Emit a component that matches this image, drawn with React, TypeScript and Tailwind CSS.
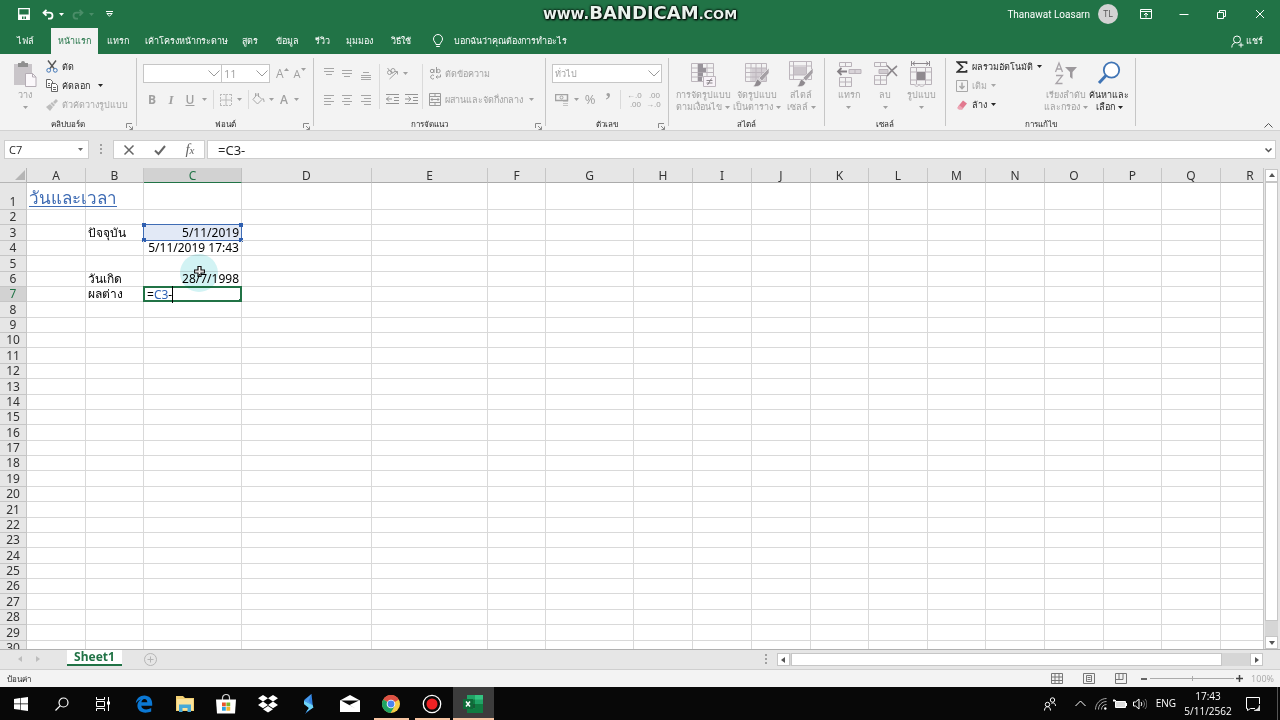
import { ReactNode } from 'react'
import clsx from 'clsx'

const UI_FONT = "font-['Open_Sans','Noto_Sans',sans-serif]"
const CELL_FONT = "font-['Noto_Sans','Open_Sans',sans-serif]"

const TABS = [
  { label: 'ไฟล์', width: 'w-[51px]' },
  { label: 'หน้าแรก', width: 'w-[47px]', active: true },
  { label: 'แทรก', width: 'w-[40px]' },
  { label: 'เค้าโครงหน้ากระดาษ', width: 'w-[96px]' },
  { label: 'สูตร', width: 'w-[32px]' },
  { label: 'ข้อมูล', width: 'w-[42px]' },
  { label: 'รีวิว', width: 'w-[29px]' },
  { label: 'มุมมอง', width: 'w-[45px]' },
  { label: 'วิธีใช้', width: 'w-[37px]' }
]

const COLUMNS = [
  { name: 'A', width: 'w-[59px]' },
  { name: 'B', width: 'w-[58px]' },
  { name: 'C', width: 'w-[98px]' },
  { name: 'D', width: 'w-[130px]' },
  { name: 'E', width: 'w-[116px]' },
  { name: 'F', width: 'w-[58px]' },
  { name: 'G', width: 'w-[88px]' },
  { name: 'H', width: 'w-[59px]' },
  { name: 'I', width: 'w-[59px]' },
  { name: 'J', width: 'w-[59px]' },
  { name: 'K', width: 'w-[58px]' },
  { name: 'L', width: 'w-[59px]' },
  { name: 'M', width: 'w-[58px]' },
  { name: 'N', width: 'w-[59px]' },
  { name: 'O', width: 'w-[59px]' },
  { name: 'P', width: 'w-[58px]' },
  { name: 'Q', width: 'w-[59px]' },
  { name: 'R', width: 'w-[59px]' }
]

const ROWS = Array.from({ length: 30 }, (_, i) => i + 1)

const CELLS: Record<string, ReactNode> = {
  A1: <span className="text-[17px] text-[#3f6cb4] underline underline-offset-2">วันและเวลา</span>,
  B3: 'ปัจจุบัน',
  C3: <ReferencedCell>5/11/2019</ReferencedCell>,
  C4: '5/11/2019 17:43',
  C5: <Pointer />,
  B6: 'วันเกิด',
  C6: '28/7/1998',
  B7: 'ผลต่าง',
  C7: <EditedCell />
}

export default function App() {
  return (
    <div
      className={clsx(
        'flex h-screen flex-col overflow-hidden bg-[#e6e6e6] text-[9px] text-[#262626]',
        UI_FONT
      )}
    >
      <TitleBar />
      <TabBar />
      <Ribbon />
      <FormulaBar />
      <Sheet />
      <SheetTabs />
      <StatusBar />
      <Taskbar />
    </div>
  )
}

function TitleBar() {
  return (
    <header className="relative flex h-7 shrink-0 items-center bg-[#217346] text-white">
      <div className="flex items-center pl-[18px]">
        <button aria-label="บันทึก">
          <svg width="12" height="12" viewBox="0 0 12 12" fill="none" stroke="#fff">
            <path d="M.7.7h10.6v10.6H.7z" strokeWidth="1.3" />
            <path d="M1 6.500h10V11H1z" fill="#fff" stroke="none" />
            <path d="M4 8.500h1.500V11H4zM6.500 8.500H8V11H6.500z" fill="#217346" stroke="none" />
          </svg>
        </button>
        <button aria-label="เลิกทำ" className="ml-3 flex items-center gap-[5px]">
          <UndoIcon />
          <Caret />
        </button>
        <button aria-label="ทำซ้ำ" className="ml-2 flex items-center gap-[5px] text-[#4a8d68]">
          <UndoIcon flip />
          <Caret />
        </button>
        <button aria-label="กำหนดแถบเครื่องมือ" className="ml-3">
          <svg width="7" height="6" viewBox="0 0 7 6" fill="none" stroke="#fff">
            <path d="M0 .5h7M.8 2.500h5.400L3.500 5.200z" />
          </svg>
        </button>
      </div>
      <Watermark />
      <div className="ml-auto flex items-center">
        <span className="font-['Roboto',sans-serif] text-[10px]">Thanawat Loasarn</span>
        <span className="ml-2 flex size-5 items-center justify-center rounded-full bg-[#d3d3d3] text-[9px] text-[#555]">
          TL
        </span>
        <div className="ml-[9px] mr-px flex">
          <WindowButton label="ตัวเลือก Ribbon">
            <path d="M.5 1.500h11v9H.5zM.5 3.500h11M6 9.500V5.500M4 7l2-2 2 2" />
          </WindowButton>
          <WindowButton label="ย่อ">
            <path d="M1.500 6.500h9" />
          </WindowButton>
          <WindowButton label="คืนค่า">
            <path d="M1.500 4.500h6v6h-6zM3.500 4.500v-2h6v6h-2" />
          </WindowButton>
          <WindowButton label="ปิด">
            <path d="M2 2l8 8M10 2l-8 8" />
          </WindowButton>
        </div>
      </div>
    </header>
  )
}

function Watermark() {
  return (
    <div className="absolute inset-x-0 top-0 flex h-[26px] items-baseline justify-center font-['DejaVu_Sans',sans-serif] leading-[26px] font-bold text-[#eaf3ed] [text-shadow:0_0_2px_#000,0_0_3px_#000,1px_1px_2px_#000]">
      <span className="text-[15px]">www.</span>
      <span className="text-[18px]">BANDICAM</span>
      <span className="text-[13px]">.COM</span>
    </div>
  )
}

function WindowButton({ label, children }: { label: string; children: ReactNode }) {
  return (
    <button aria-label={label} className="flex w-[38px] justify-center">
      <svg width="12" height="12" viewBox="0 0 12 12" fill="none" stroke="#fff">
        {children}
      </svg>
    </button>
  )
}

function UndoIcon({ flip }: { flip?: boolean }) {
  return (
    <svg
      width="12"
      height="11"
      viewBox="0 0 12 11"
      fill="none"
      stroke="currentColor"
      strokeWidth="1.8"
      className={clsx(flip && '-scale-x-100')}
    >
      <path d="M1.500 3.700h6a2.900 2.900 0 0 1 0 6H6M4.500.8l-3 2.900 3 2.900" />
    </svg>
  )
}

function Caret({ className }: { className?: string }) {
  return (
    <svg
      width="5"
      height="3"
      viewBox="0 0 5 3"
      fill="currentColor"
      className={clsx('shrink-0', className)}
    >
      <path d="M0 0h5L2.500 3z" />
    </svg>
  )
}

function TabBar() {
  return (
    <nav className="flex h-[26px] shrink-0 items-stretch bg-[#217346] text-white">
      {TABS.map((tab) => (
        <button
          key={tab.label}
          className={clsx(
            'flex shrink-0 items-center justify-center whitespace-nowrap',
            tab.width,
            tab.active && 'bg-[#f3f3f3] text-[#217346]'
          )}
        >
          {tab.label}
        </button>
      ))}
      <button className="ml-[13px] flex items-center gap-[10px] whitespace-nowrap">
        <svg width="12" height="14" viewBox="0 0 12 14" fill="none" stroke="#fff">
          <path d="M4 10.500c0-2-2.500-2.800-2.500-5.500a4.500 4.500 0 0 1 9 0c0 2.700-2.500 3.500-2.500 5.500zM4.200 12.500h3.600" />
        </svg>
        บอกฉันว่าคุณต้องการทำอะไร
      </button>
      <button className="mr-[17px] ml-auto flex items-center gap-[2px]">
        <svg width="13" height="13" viewBox="0 0 13 13" fill="none" stroke="#fff">
          <circle cx="6" cy="4.500" r="3.500" />
          <path d="M.8 12.500c0-3 2-4.700 4-5M7.500 10h5M10 7.500v5" />
        </svg>
        แชร์
      </button>
    </nav>
  )
}

function Ribbon() {
  return (
    <div className="flex h-[77px] shrink-0 border-b border-[#d2d2d2] bg-[#f3f3f3]">
      <Group title="คลิปบอร์ด" width="w-[137px]" launcher>
        <div className="flex">
          <BigButton width="w-[34px]" className="ml-2" label="วาง" muted>
            <svg width="24" height="26" viewBox="0 0 24 26">
              <path d="M1 3h18v21H1z" fill="#c9c5c9" />
              <path d="M5 2h3a2 2 0 0 1 4 0h3v4H5z" fill="#8f8f8f" />
              <path d="M12.500 12.500h7l3.500 3.500v9.500H12.500z" fill="#fbf8fb" stroke="#b5adb5" />
              <path d="M19.500 12.500V16H23" fill="none" stroke="#b5adb5" />
            </svg>
          </BigButton>
          <div className="ml-1 flex flex-col pt-[3px]">
            <SmallButton label="ตัด">
              <svg width="12" height="13" viewBox="0 0 12 13" fill="none">
                <path d="M2 .5l6 8M10 .5l-6 8" stroke="#555" strokeWidth="1.400" />
                <circle cx="2.700" cy="10.300" r="1.900" stroke="#3f74b5" />
                <circle cx="9.300" cy="10.300" r="1.900" stroke="#3f74b5" />
              </svg>
            </SmallButton>
            <SmallButton label="คัดลอก" caret="ml-1">
              <svg width="12" height="13" viewBox="0 0 12 13" stroke="#666" fill="#fff">
                <path d="M.5.5h4l2 2v6h-6z" />
                <path d="M5.500 4.500h4l2 2v6h-6zM7 8.500h3M7 10.500h3M2 4.500h2M2 6.500h2" />
              </svg>
            </SmallButton>
            <SmallButton label="ตัวคัดวางรูปแบบ" muted>
              <svg width="12" height="12" viewBox="0 0 12 12" fill="#bdbdbd">
                <path d="M10 0l2 2-3 3-2-2zM6 3l3 3-1.500 1.500-3-3zM4 5l3 3-3 4-4-4z" />
              </svg>
            </SmallButton>
          </div>
        </div>
      </Group>
      <Group title="ฟอนต์" width="w-[177px]" launcher muted>
        <div className="flex h-full flex-col gap-[7px] pt-[10px] pl-[6px]">
          <div className="flex items-center">
            <Combo label="ฟอนต์" value="" width="w-[79px]" />
            <Combo
              label="ขนาดฟอนต์"
              value="11"
              width="w-[49px]"
              className="-ml-px text-[11px]"
            />
            <button aria-label="เพิ่มขนาด" className="ml-[6px] flex text-[12px] leading-[19px]">
              A<Caret className="mt-1 rotate-180" />
            </button>
            <button aria-label="ลดขนาด" className="ml-[5px] flex text-[11px] leading-[19px]">
              A<Caret className="mt-1" />
            </button>
          </div>
          <div className="flex h-[19px] items-center text-[12px]">
            <button className="w-[18px] font-bold">B</button>
            <button className="w-5 font-['Liberation_Serif',serif] text-[13px] font-bold italic">
              I
            </button>
            <button className="w-[18px] font-semibold underline">U</button>
            <Caret className="mx-[3px]" />
            <VLine className="mx-[3px]" />
            <button aria-label="เส้นขอบ" className="mx-[3px] flex items-center gap-[5px]">
              <svg width="12" height="12" viewBox="0 0 12 12" fill="none" stroke="#bababa">
                <path d="M.5 0v12M11.500 0v12M0 .5h12M0 11.500h12" strokeDasharray="2 1" />
                <path d="M6 0v12M0 6h12" />
              </svg>
              <Caret />
            </button>
            <VLine className="mx-[3px]" />
            <button aria-label="สีเติม" className="flex items-center gap-1">
              <svg width="13" height="13" viewBox="0 0 13 13" fill="none" stroke="#a6a6a6">
                <path d="M5 1.500l5 5-4.500 4.500L1 6.500zM3.500 3V1a1.500 1.500 0 0 1 3 0v3" />
                <path d="M10.500 5c1.500 1 1.500 3 1.500 4" />
              </svg>
              <Caret />
            </button>
            <button
              aria-label="สีฟอนต์"
              className="ml-[6px] flex items-center gap-[6px] font-semibold"
            >
              <span>A</span>
              <Caret />
            </button>
          </div>
        </div>
      </Group>
      <Group title="การจัดแนว" width="w-[232px]" launcher muted>
        <div className="flex pt-[10px]">
          <div className="grid w-[65px] grid-cols-3 gap-y-[7px] pr-1 pl-[6px]">
            <AlignButton label="จัดบน" d="M1 1.500h10M1 4.500h10M3 7.500h6" />
            <AlignButton label="จัดกลางแนวตั้ง" d="M1 3.500h10M1 6.500h10M3 9.500h6" />
            <AlignButton label="จัดล่าง" d="M3 5.500h6M1 8.500h10M1 10.500h10M1 12.500h10" />
            <AlignButton label="จัดซ้าย" d="M1 2.500h10M1 5.500h7M1 8.500h10M1 11.500h7" />
            <AlignButton label="จัดกึ่งกลาง" d="M1 2.500h10M3 5.500h6M1 8.500h10M3 11.500h6" />
            <AlignButton label="จัดขวา" d="M1 2.500h10M4 5.500h7M1 8.500h10M4 11.500h7" />
          </div>
          <div className="flex w-[44px] flex-col gap-[7px] border-x border-[#dadada] pl-[6px]">
            <button aria-label="การวางแนว" className="flex h-[19px] items-center gap-1">
              <svg width="13" height="13" viewBox="0 0 13 13" fill="none" stroke="#a0a0a0">
                <circle cx="3.500" cy="5.500" r="2" />
                <circle cx="7" cy="3.500" r="2" />
                <path d="M1.500 1l5 6M3.500 12L11.500 4.500M8.500 4.500h3v3" />
              </svg>
              <Caret />
            </button>
            <div className="flex h-[19px] items-center gap-[6px]">
              <button aria-label="ลดการเยื้อง">
                <svg width="13" height="12" viewBox="0 0 13 12" fill="none" stroke="#929292">
                  <path d="M0 .5h13M8 3.500h5M8 6.500h5M0 9.500h13M0 5h6M3 2.500L.7 5 3 7.500" />
                </svg>
              </button>
              <button aria-label="เพิ่มการเยื้อง">
                <svg width="13" height="12" viewBox="0 0 13 12" fill="none" stroke="#929292">
                  <path d="M0 .5h13M8 3.500h5M8 6.500h5M0 9.500h13M0 5h6M3.500 2.500L5.800 5 3.500 7.500" />
                </svg>
              </button>
            </div>
          </div>
          <div className="flex flex-col gap-[7px] pl-[6px] whitespace-nowrap">
            <button className="flex h-[19px] items-center gap-1">
              <svg width="12" height="13" viewBox="0 0 12 13" fill="none" stroke="#9a9a9a">
                <circle cx="3" cy="4" r="1.700" />
                <path d="M5 2v4M7.500 0v6" />
                <circle cx="9.500" cy="4" r="1.700" />
                <path d="M5 8.500a2 2 0 1 0 0 3M11.500 7.500v2.500H7M8.500 8.500L7 10l1.500 1.500" />
              </svg>
              ตัดข้อความ
            </button>
            <button className="flex h-[19px] items-center gap-1">
              <svg width="12" height="13" viewBox="0 0 12 13" fill="none" stroke="#9a9a9a">
                <path d="M.5.5h11v12H.5zM.5 3.500h11M.5 9.500h11M6 .5v3M6 9.500v3M2 6.500h8M3.500 5L2 6.500 3.500 8M8.500 5L10 6.500 8.500 8" />
              </svg>
              ผสานและจัดกึ่งกลาง
              <Caret className="ml-[2px]" />
            </button>
          </div>
        </div>
      </Group>
      <Group title="ตัวเลข" width="w-[123px]" launcher muted>
        <div className="flex flex-col gap-[7px] pt-[10px] pl-[6px]">
          <Combo label="รูปแบบตัวเลข" value="ทั่วไป" width="w-[110px]" />
          <div className="flex h-[19px] items-center">
            <button aria-label="รูปแบบบัญชี" className="flex items-center gap-[5px] pl-[3px]">
              <svg width="14" height="12" viewBox="0 0 14 12" fill="none" stroke="#a3a3a3">
                <path d="M.5.5h12v6H.5z" strokeWidth="1.500" />
                <circle cx="6.500" cy="3.500" r="1.500" />
                <path d="M8 7.500h5M8 9.500h5M8 11.500h5" stroke="#c4c4c4" />
              </svg>
              <Caret />
            </button>
            <button className="ml-[3px] w-4 text-[13px]">%</button>
            <button
              aria-label="ลักษณะจุลภาค"
              className="ml-[6px] w-2 font-['Liberation_Serif',serif] text-[20px] leading-[10px] font-bold"
            >
              ’
            </button>
            <VLine className="mr-[6px] ml-2" />
            <DecimalButton label="เพิ่มตำแหน่งทศนิยม" top="←.0" bottom=".00" />
            <DecimalButton label="ลดตำแหน่งทศนิยม" top=".00" bottom="→.0" />
          </div>
        </div>
      </Group>
      <Group title="สไตล์" width="w-[156px]" muted>
        <div className="flex pl-[3px]">
          <BigButton width="w-[62px]" label="การจัดรูปแบบ" label2="ตามเงื่อนไข" muted>
            <svg width="26" height="26" viewBox="0 0 26 26" fill="none" stroke="#bdb6bd">
              <path d="M1.500 2.500h22v18h-22zM1.500 7h22M1.500 11.500h22M1.500 16h22M8 2.500v18M17 2.500v18" />
              <path d="M8 3h5v4H8zM8 7h8v4H8zM8 11.500h5v4H8zM8 16h4v4H8z" fill="#98939a" stroke="none" />
              <path d="M13.500 15.500h12v10h-12z" fill="#f8f3f8" />
              <path d="M16.500 19.500h6M16.500 22h6M21.500 17.500l-4 6.500" stroke="#8a858a" />
            </svg>
          </BigButton>
          <BigButton width="w-[46px]" label="จัดรูปแบบ" label2="เป็นตาราง" muted>
            <svg width="26" height="26" viewBox="0 0 26 26" fill="none" stroke="#bdb6bd">
              <path d="M8 7h14v13H8z" fill="#d3ced3" stroke="none" />
              <path d="M1.500 2.500h21v18h-21zM1.500 7h21M1.500 11.500h21M1.500 16h21M7 2.500v18M12 2.500v18M17.500 2.500v18" />
              <Brush />
            </svg>
          </BigButton>
          <BigButton width="w-[42px]" label="สไตล์" label2="เซลล์" muted>
            <svg width="26" height="26" viewBox="0 0 26 26" fill="none" stroke="#bdb6bd">
              <path d="M5 6h13v8H5z" fill="#cbc6cb" stroke="none" />
              <path d="M1.500.5h22v18h-22zM1.500 5h22M1.500 14h22M5.500 .5v18M18.500 .5v18" />
              <Brush />
            </svg>
          </BigButton>
        </div>
      </Group>
      <Group title="เซลล์" width="w-[121px]" muted>
        <div className="flex pl-[5px]">
          <BigButton width="w-[37px]" label="แทรก" muted>
            <svg width="26" height="26" viewBox="0 0 26 26" fill="none" stroke="#b9b2b9">
              <path d="M3.500 1.500h12v4h-12zM9.500 1.500v4M3.500 16.500h12v9h-12zM3.500 21h12M9.500 16.500v9" />
              <path d="M13 8.500h12v4H13zM19 8.500v4" fill="#d8d3d8" />
              <path d="M2 10.500h9M5.500 7L2 10.500 5.500 14" stroke="#858085" strokeWidth="1.800" />
            </svg>
          </BigButton>
          <BigButton width="w-[36px]" label="ลบ" muted>
            <svg width="26" height="26" viewBox="0 0 26 26" fill="none" stroke="#b9b2b9">
              <path d="M2.500 1.500h12v4h-12zM8.500 1.500v4M2.500 14.500h12v9h-12zM2.500 19h12M8.500 14.500v9" />
              <path d="M7 8.500h9v4H7z" fill="#d0cbd0" />
              <path d="M15 4.500c3 3 6 6 10 10.500M25 5c-4 3-7 6-10 10" stroke="#8d888d" strokeWidth="1.600" />
            </svg>
          </BigButton>
          <BigButton width="w-[37px]" label="รูปแบบ" muted>
            <svg width="26" height="26" viewBox="0 0 26 26" fill="none" stroke="#b9b2b9">
              <path d="M2.500 0v5M20.500 0v5M3.500 2.500h16M6 .5l-2.500 2L6 4.500M17 .5l2.500 2-2.500 2" stroke="#8d888d" />
              <path d="M1.500 6.500h21v17h-21zM1.500 11h21M1.500 19h21M7.500 6.500v17M16.500 6.500v17" />
              <path d="M8 11h8v8H8z" fill="#8f8a8f" stroke="none" />
              <path d="M5 23.500c2 2.500 4 2.500 5 0 1 2.500 4 2.500 6 0" fill="#f3f3f3" />
            </svg>
          </BigButton>
        </div>
      </Group>
      <Group title="การแก้ไข" width="w-[190px]">
        <div className="flex pl-[10px]">
          <div className="flex w-[88px] flex-col pt-[3px]">
            <SmallButton label="ผลรวมอัตโนมัติ" caret="ml-0">
              <svg width="12" height="12" viewBox="0 0 12 12" fill="none" stroke="#333">
                <path d="M10.500 3V1.200h-9L6.500 6l-5 4.800h9V9" strokeWidth="1.700" />
              </svg>
            </SmallButton>
            <SmallButton label="เติม" caret="ml-0" muted>
              <svg width="12" height="12" viewBox="0 0 12 12" fill="none" stroke="#a8a8a8">
                <path d="M.5.5h11v11H.5z" />
                <path d="M6 2.500v6M3.500 6L6 8.700 8.500 6" strokeWidth="1.500" />
              </svg>
            </SmallButton>
            <SmallButton label="ล้าง" caret="ml-0">
              <svg width="12" height="12" viewBox="0 0 12 12">
                <path d="M7 1.500l4 3-5 6-4-3z" fill="#e2798f" />
                <path d="M3.300 6.200l4 3L6 10.800H3L1 9z" fill="#eda6b5" />
              </svg>
            </SmallButton>
          </div>
          <BigButton width="w-[44px]" label="เรียงลำดับ" label2="และกรอง" muted>
            <svg width="26" height="26" viewBox="0 0 26 26" fill="none" stroke="#a9a4a9">
              <path d="M2.500 11L6 2l3.500 9M3.700 8h4.600M3 14.500h6.500L3 22.500h6.500" strokeWidth="1.300" />
              <path d="M12 6h12l-4.500 5v7L17 16v-5z" fill="#9c989c" stroke="none" />
            </svg>
          </BigButton>
          <BigButton width="w-[42px]" label="ค้นหาและ" label2="เลือก">
            <svg width="26" height="26" viewBox="0 0 26 26" fill="none" stroke="#3f74b5">
              <circle cx="15.500" cy="9" r="7.700" fill="#fff" strokeWidth="1.800" />
              <path d="M10 14.500l-7 7.500" strokeWidth="3" />
            </svg>
          </BigButton>
        </div>
      </Group>
      <button aria-label="ยุบ Ribbon" className="mt-auto mr-[7px] mb-[2px] ml-auto">
        <svg width="9" height="5" viewBox="0 0 9 5" fill="none" stroke="#555">
          <path d="M.5 4.500l4-4 4 4" />
        </svg>
      </button>
    </div>
  )
}

function Brush() {
  return (
    <>
      <path d="M25 7v5l-7 8-3-3z" fill="#a5a0a5" stroke="#f3f3f3" strokeWidth=".6" />
      <path
        d="M13.500 18l4 3.500c-1 4-5 4.500-8.500 4 2.500-1.500 2-5 4.500-7.500z"
        fill="#8f8a8f"
        stroke="#f3f3f3"
        strokeWidth=".6"
      />
    </>
  )
}

interface GroupProps {
  title: string
  width: string
  launcher?: boolean
  muted?: boolean
  children: ReactNode
}

function Group({ title, width, launcher, muted, children }: GroupProps) {
  return (
    <section className={clsx('flex shrink-0 py-1', width)}>
      <div className="-mt-1 flex min-w-0 flex-1 flex-col">
        <div className={clsx('h-16 shrink-0', muted && 'text-[#a0a0a0]')}>{children}</div>
        <div className="relative text-center text-[8px] leading-3">
          {title}
          {launcher && (
            <button
              aria-label={`ตัวเลือก${title}`}
              className="absolute right-[3px] bottom-0 text-[#888]"
            >
              <svg width="7" height="7" viewBox="0 0 7 7" fill="none" stroke="currentColor">
                <path d="M.5 5V.5H6M3 3l3.500 3.500M6.500 3.500v3h-3" />
              </svg>
            </button>
          )}
        </div>
      </div>
      <div className="w-px bg-[#c6c6c6]" />
    </section>
  )
}

interface ButtonProps {
  label: string
  muted?: boolean
  children: ReactNode
}

interface BigButtonProps extends ButtonProps {
  width: string
  label2?: string
  className?: string
}

function BigButton({ width, label, label2, muted, className, children }: BigButtonProps) {
  return (
    <button
      className={clsx(
        'flex shrink-0 flex-col items-center pt-[7px] leading-3 whitespace-nowrap',
        width,
        muted && 'text-[#a0a0a0]',
        className
      )}
    >
      {children}
      <span className="mt-[2px]">{label}</span>
      <span className="flex h-3 items-center gap-[3px]">
        {label2}
        <Caret />
      </span>
    </button>
  )
}

function SmallButton({ label, muted, caret, children }: ButtonProps & { caret?: string }) {
  return (
    <button
      className={clsx(
        'flex h-[19px] items-center gap-1 whitespace-nowrap [&>svg]:shrink-0',
        muted && 'text-[#a6a6a6]'
      )}
    >
      {children}
      {label}
      {caret && <Caret className={caret} />}
    </button>
  )
}

function AlignButton({ label, d }: { label: string; d: string }) {
  return (
    <button aria-label={label} className="flex h-[19px] items-center justify-center">
      <svg width="12" height="13" viewBox="0 0 12 13" fill="none" stroke="#a6a6a6">
        <path d={d} />
      </svg>
    </button>
  )
}

function DecimalButton({ label, top, bottom }: { label: string; top: string; bottom: string }) {
  return (
    <button
      aria-label={label}
      className="mr-[5px] w-[14px] text-right text-[8px] leading-[9px] tabular-nums font-['Liberation_Sans',sans-serif]"
    >
      <span className="block">{top}</span>
      <span className="block">{bottom}</span>
    </button>
  )
}

interface ComboProps {
  label: string
  value: string
  width: string
  className?: string
}

function Combo({ label, value, width, className }: ComboProps) {
  return (
    <div className={clsx('relative h-[19px]', width, className)}>
      <select
        aria-label={label}
        className="block h-full w-full appearance-none border border-[#c6c6c6] bg-white px-[2px] leading-[17px]"
      >
        <option>{value}</option>
      </select>
      <svg
        width="12"
        height="7"
        viewBox="0 0 12 7"
        fill="none"
        stroke="#999"
        className="pointer-events-none absolute top-[6px] right-[2px]"
      >
        <path d="M.5.5L6 6 11.500.5" />
      </svg>
    </div>
  )
}

function VLine({ className }: { className?: string }) {
  return <span className={clsx('h-full w-px shrink-0 bg-[#dadada]', className)} />
}

function FormulaBar() {
  return (
    <div className="flex h-[37px] shrink-0 items-start px-1 pt-[9px]">
      <div className="relative w-[85px]">
        <input
          aria-label="กล่องชื่อ"
          defaultValue="C7"
          className="block h-[19px] w-full border border-[#cdcdcd] bg-white px-1 text-[11px]"
        />
        <Caret className="absolute top-2 right-[6px] text-[#666]" />
      </div>
      <Dots className="mx-[10px]" />
      <div className="flex h-[19px] w-[92px] items-center justify-around border border-[#cdcdcd] bg-white text-[#666]">
        <button aria-label="ยกเลิก">
          <svg width="12" height="12" viewBox="0 0 12 12" fill="none" stroke="currentColor">
            <path d="M1.500 1.500l9 9M10.500 1.500l-9 9" strokeWidth="1.500" />
          </svg>
        </button>
        <button aria-label="ป้อน">
          <svg width="12" height="12" viewBox="0 0 12 12" fill="none" stroke="currentColor">
            <path d="M1 6.500l3.500 3.500L11 2" strokeWidth="2" />
          </svg>
        </button>
        <button
          aria-label="แทรกฟังก์ชัน"
          className="font-['Liberation_Serif',serif] text-[15px] leading-4 italic"
        >
          f<span className="text-[11px]">x</span>
        </button>
      </div>
      <div className="relative ml-[2px] flex-1">
        <input
          aria-label="แถบสูตร"
          defaultValue="=C3-"
          className={clsx(
            'block h-[19px] w-full border border-[#cdcdcd] bg-white px-[10px] text-[13px] leading-[17px]',
            CELL_FONT
          )}
        />
        <svg
          width="7"
          height="5"
          viewBox="0 0 7 5"
          fill="none"
          stroke="#555"
          className="absolute top-2 right-1"
        >
          <path d="M.5.5l3 3 3-3" strokeWidth="1.500" />
        </svg>
      </div>
    </div>
  )
}

function Dots({ className }: { className?: string }) {
  return (
    <svg width="4" height="11" viewBox="0 0 4 11" fill="#a0a0a0" className={clsx('mt-1', className)}>
      <path d="M1 0h2v2H1zM1 4h2v2H1zM1 8h2v2H1z" />
    </svg>
  )
}

function Sheet() {
  return (
    <div className={clsx('flex min-h-0 flex-1 text-[12px]', CELL_FONT)}>
      <div className="flex-1 overflow-hidden border-r border-[#c6c6c6]">
        <table className="w-0 table-fixed border-separate border-spacing-0 bg-white">
          <thead>
            <tr className="h-[15px] bg-[#e6e6e6]">
              <th className="w-[27px] border-r border-b border-[#b5b5b5] p-0">
                <svg width="10" height="10" viewBox="0 0 10 10" className="mr-px ml-auto">
                  <path d="M10 0v10H0z" fill="#b5b5b5" />
                </svg>
              </th>
              {COLUMNS.map((column) => (
                <th
                  key={column.name}
                  className={clsx(
                    'border-r border-b p-0 pt-[2px] leading-3 font-normal',
                    column.width,
                    column.name === 'C'
                      ? 'border-r-[#c0c0c0] border-b-[#217346] bg-[#d2d2d2] text-[#217346]'
                      : 'border-r-[#c6c6c6] border-b-[#ababab] text-[#333]'
                  )}
                >
                  {column.name}
                </th>
              ))}
            </tr>
          </thead>
          <tbody>
            {ROWS.map((row) => (
              <tr key={row} className={rowHeight(row)}>
                <th
                  className={clsx(
                    'border-r border-b border-[#c6c6c6] p-0 align-bottom leading-[14px] font-normal',
                    row === 7 ? 'bg-[#d2d2d2] text-[#217346]' : 'bg-[#e6e6e6] text-[#333]'
                  )}
                >
                  {row}
                </th>
                {COLUMNS.map(({ name }) => (
                  <td
                    key={name}
                    className={clsx(
                      'relative border-r border-b border-[#d9d9d9] p-0 px-[2px] align-bottom whitespace-nowrap text-black',
                      name === 'C' && 'text-right',
                      row === 1 ? 'leading-[18px]' : 'leading-[14px]'
                    )}
                  >
                    {CELLS[`${name}${row}`]}
                  </td>
                ))}
              </tr>
            ))}
          </tbody>
        </table>
      </div>
      <div className="mt-px mr-[2px] ml-px flex w-[13px] flex-col bg-[#d6d6d6]">
        <ScrollButton label="เลื่อนขึ้น" d="M0 4h6L3 0z" />
        <div className="flex-1 border border-[#c6c6c6] bg-white" />
        <div className="h-[15px]" />
        <ScrollButton label="เลื่อนลง" d="M0 1h6L3 5z" />
      </div>
    </div>
  )
}

// the rows do not divide evenly, three out of eight take the spare pixel
function rowHeight(row: number) {
  if (row === 1) {
    return 'h-[27px]'
  }

  return [0, 3, 5].includes(row % 8) ? 'h-[16px]' : 'h-[15px]'
}

function ReferencedCell({ children }: { children: ReactNode }) {
  return (
    <>
      <span className="absolute -inset-px border border-[#3f6cb4] bg-[#e2e9f6]">
        <Handle className="-top-[2px] -left-[2px]" />
        <Handle className="-top-[2px] -right-[2px]" />
        <Handle className="-bottom-[2px] -left-[2px]" />
        <Handle className="-right-[2px] -bottom-[2px]" />
      </span>
      <span className="relative">{children}</span>
    </>
  )
}

function Handle({ className }: { className: string }) {
  return <span className={clsx('absolute size-1 bg-[#2f5fb0]', className)} />
}

function EditedCell() {
  return (
    <span className="absolute -inset-px border-2 border-[#217346] bg-white px-[2px] text-left leading-[13px]">
      =<span className="text-[#2f62b5]">C3</span>
      <span className="border-r border-black">-</span>
      <span className="absolute -right-[2px] -bottom-[2px] size-[3px] bg-[#217346]" />
    </span>
  )
}

function Pointer() {
  return (
    <span className="pointer-events-none absolute -top-[2px] left-9 z-10 size-[38px] rounded-full bg-[#bfeef0]/70 mix-blend-multiply">
      <svg width="11" height="11" viewBox="0 0 11 11" className="absolute top-3 left-[14px]">
        <path
          d="M4 .5h3V4h3.500v3H7v3.500H4V7H.5V4H4z"
          fill="#fff"
          stroke="#111"
          strokeWidth="1.200"
        />
      </svg>
    </span>
  )
}

function ScrollButton({ label, d }: { label: string; d: string }) {
  return (
    <button
      aria-label={label}
      className="flex size-[13px] shrink-0 items-center justify-center border border-[#c6c6c6] bg-white"
    >
      <svg width="6" height="6" viewBox="0 0 6 6" fill="#555">
        <path d={d} />
      </svg>
    </button>
  )
}

function SheetTabs() {
  return (
    <div className="flex h-5 shrink-0 items-start border-t border-[#b0b0b0]">
      <div className="flex h-[18px] w-[67px] items-center gap-[14px] pl-[18px]">
        <button aria-label="แผ่นงานก่อนหน้า">
          <svg width="4" height="6" viewBox="0 0 4 6" fill="#bdbdbd">
            <path d="M4 0v6L0 3z" />
          </svg>
        </button>
        <button aria-label="แผ่นงานถัดไป">
          <svg width="4" height="6" viewBox="0 0 4 6" fill="#bdbdbd">
            <path d="M0 0v6l4-3z" />
          </svg>
        </button>
      </div>
      <button
        className={clsx(
          'h-4 w-[55px] border-b-2 border-[#217346] bg-white text-[12px] leading-[14px] font-bold text-[#217346]',
          CELL_FONT
        )}
      >
        Sheet1
      </button>
      <button aria-label="แผ่นงานใหม่" className="mt-[3px] ml-[22px]">
        <svg width="13" height="13" viewBox="0 0 13 13" fill="none" stroke="#b5b5b5">
          <circle cx="6.500" cy="6.500" r="6" />
          <path d="M3.500 6.500h6M6.500 3.500v6" />
        </svg>
      </button>
      <Dots className="mr-[9px] ml-auto" />
      <div className="mt-[3px] mr-[17px] flex w-[38%] bg-[#d6d6d6]">
        <ScrollButton label="เลื่อนซ้าย" d="M5 0v6L1 3z" />
        <div className="ml-px flex-1 border border-[#c6c6c6] bg-white" />
        <div className="w-7" />
        <ScrollButton label="เลื่อนขวา" d="M1 0v6l4-3z" />
      </div>
    </div>
  )
}

function StatusBar() {
  return (
    <div className="flex h-[18px] shrink-0 items-center border-t border-[#cfcfcf] bg-[#f3f3f3] pr-[6px] pl-[7px] text-[8px]">
      ป้อนค่า
      <div className="ml-auto flex items-center gap-5">
        <ViewButton label="ปกติ" d="M.5.5h11v10H.5zM4 .5v10M8 .5v10M.5 4h11M.5 7.500h11" />
        <ViewButton
          label="เค้าโครงหน้า"
          d="M.5.5h11v10H.5zM3.500 2.500h5v6h-5zM4.500 4.500h3M4.500 6.500h3"
        />
        <ViewButton label="ตัวอย่างตัวแบ่งหน้า" d="M.5.5h11v10H.5zM4 .5v6h4v-6M.5 6.500H4" />
      </div>
      <button aria-label="ย่อ" className="mr-[3px] ml-[14px] h-[2px] w-[6px] bg-[#666]" />
      <input
        type="range"
        aria-label="ย่อ/ขยาย"
        className="h-px w-[84px] appearance-none bg-[#ababab] [&::-webkit-slider-thumb]:h-[5px] [&::-webkit-slider-thumb]:w-px [&::-webkit-slider-thumb]:appearance-none [&::-webkit-slider-thumb]:bg-[#ababab]"
      />
      <button aria-label="ขยาย" className="mr-2 ml-[2px]">
        <svg width="7" height="7" viewBox="0 0 7 7" stroke="#444" strokeWidth="1.500">
          <path d="M0 3.500h7M3.500 0v7" />
        </svg>
      </button>
      <span className="text-[9px] text-[#a8a8a8]">100%</span>
    </div>
  )
}

function ViewButton({ label, d }: { label: string; d: string }) {
  return (
    <button aria-label={label}>
      <svg width="12" height="11" viewBox="0 0 12 11" fill="none" stroke="#777">
        <path d={d} />
      </svg>
    </button>
  )
}

function Taskbar() {
  return (
    <footer className="flex h-[33px] shrink-0 bg-[#080808] text-white">
      <div className="flex w-[494px]">
        <TaskButton label="เริ่ม">
          <svg width="14" height="14" viewBox="0 0 14 14" fill="#fff">
            <path d="M0 2l6-.9v5.500H0zM6.600 1L14 0v6.600H6.600zM0 7.200h6v5.500l-6-.8zM6.600 7.200H14V14l-7.400-1.100z" />
          </svg>
        </TaskButton>
        <TaskButton label="ค้นหา">
          <svg width="14" height="14" viewBox="0 0 14 14" fill="none" stroke="#fff">
            <circle cx="8.500" cy="5.500" r="4.500" strokeWidth="1.200" />
            <path d="M5.300 8.700L.5 13.500" strokeWidth="1.200" />
          </svg>
        </TaskButton>
        <TaskButton label="มุมมองงาน">
          <svg width="14" height="14" viewBox="0 0 14 14" fill="none" stroke="#fff">
            <path d="M.5 0v2.500h8V0M.5 4.500h8v5h-8zM.5 14v-2.500h8V14M12.500 0v14" />
            <path d="M11 4.500h3v3h-3z" fill="#fff" stroke="none" />
          </svg>
        </TaskButton>
        <TaskButton label="Edge">
          <svg width="18" height="18" viewBox="0 0 18 18">
            <path
              d="M.8 8.300C1.300 3.500 5 .5 9.300.5c5 0 7.900 3.600 7.900 8v2.200H6.300c.2 2.700 2.400 3.700 4.900 3.700 1.700 0 3.500-.5 5-1.400v3.500c-1.600.7-3.600 1.200-5.800 1.200-5 0-8-2.900-8-7.100 0-2.700 1.400-4.900 3.700-6.100C4 5 2.300 6.200.8 8.300zM6.400 7.300h5.900c0-2-1-3.300-2.800-3.300-1.700 0-2.800 1.300-3.100 3.300z"
              fill="#0b78d4"
            />
          </svg>
        </TaskButton>
        <TaskButton label="File Explorer">
          <svg width="18" height="16" viewBox="0 0 18 16">
            <path d="M0 0h7l2 2h9v13H0z" fill="#f2cf72" />
            <path d="M1 3h16v11H1z" fill="#fbe39c" />
            <path d="M3 8.500h12V16h-3.500v-4h-5v4H3z" fill="#46a9d8" />
          </svg>
        </TaskButton>
        <TaskButton label="Store">
          <svg width="20" height="20" viewBox="0 0 20 20">
            <path d="M6.500 6V4a3.500 3.500 0 0 1 7 0v2" fill="none" stroke="#ccc" strokeWidth="1.200" />
            <path d="M0 5.500h20L19 19.500H1z" fill="#fff" />
            <path d="M6 8.500h3.800v3.800H6z" fill="#e8552b" />
            <path d="M10.400 8.500h3.800v3.800h-3.800z" fill="#7fb52b" />
            <path d="M6 12.900h3.800v3.800H6z" fill="#2a9fe0" />
            <path d="M10.400 12.900h3.800v3.800h-3.800z" fill="#f5b52b" />
          </svg>
        </TaskButton>
        <TaskButton label="Dropbox">
          <svg width="20" height="18" viewBox="0 0 20 18" fill="#fff">
            <path d="M5 0l5 3.300-5 3.300L0 3.300zM15 0l5 3.300-5 3.300-5-3.300zM5 6.600l5 3.300-5 3.300L0 9.900zM15 6.600l5 3.300-5 3.300-5-3.300zM5 14.300L10 11l5 3.300-5 3.300z" />
          </svg>
        </TaskButton>
        <TaskButton label="Shadow">
          <svg width="12" height="20" viewBox="0 0 12 20">
            <path d="M8.500 0L1.500 5.500 1 10l5 4-4 6 8-6.500z" fill="#2f7fdd" />
            <path d="M1 6.500l8.500 4.500 1 2.500L3 18l3-4-5-4z" fill="#6fd4f5" />
            <path d="M8.500 0L5.500 7l4 4-8.500-4z" fill="#4a9cec" />
          </svg>
        </TaskButton>
        <TaskButton label="Mail">
          <svg width="20" height="17" viewBox="0 0 20 17">
            <path d="M0 5.500L10 0l10 5.500V17H0z" fill="#fff" />
            <path d="M1 5.500h18L9.500 10l6 3.500z" fill="#080808" />
          </svg>
        </TaskButton>
        <TaskButton label="Chrome" running>
          <svg width="18" height="18" viewBox="0 0 18 18">
            <circle cx="9" cy="9" r="9" fill="#f7cd46" />
            <path d="M9 9L1.200 4.500A9 9 0 0 1 16.800 4.500z" fill="#dd5144" />
            <path d="M9 4.500h7.800L9 9z" fill="#dd5144" />
            <path d="M1.200 4.500A9 9 0 0 0 8.500 18l4-6.500L9 9z" fill="#1ea362" />
            <circle cx="9" cy="9" r="4.300" fill="#fff" />
            <circle cx="9" cy="9" r="3.400" fill="#4b83ee" />
          </svg>
        </TaskButton>
        <TaskButton label="Bandicam" running>
          <svg width="20" height="20" viewBox="0 0 20 20">
            <circle cx="10" cy="10" r="8.700" fill="#080808" stroke="#fff" strokeWidth="1.300" />
            <circle cx="10" cy="10" r="5.500" fill="#ee2224" />
          </svg>
        </TaskButton>
        <TaskButton label="Excel" running active>
          <svg width="20" height="18" viewBox="0 0 20 18">
            <path d="M4 0h16v18H4z" fill="#21a366" />
            <path d="M12 0h8v4.500h-8z" fill="#33c481" />
            <path d="M4 4.500h8V9H4z" fill="#107c41" />
            <path d="M4 9h8v4.500H4z" fill="#185c37" />
            <path d="M12 9h8v4.500h-8zM4 13.500h16V18H4z" fill="#107c41" />
            <path d="M0 4h10v10H0z" fill="#0e6b38" />
            <path d="M3 6.500l4 5M7 6.500l-4 5" stroke="#fff" strokeWidth="1.500" />
          </svg>
        </TaskButton>
      </div>
      <div className="ml-auto flex items-center text-[10px]">
        <button aria-label="บุคคล">
          <svg width="12" height="14" viewBox="0 0 12 14" fill="none" stroke="#fff">
            <circle cx="8.500" cy="3" r="2.200" />
            <circle cx="3.500" cy="7.500" r="2.200" />
            <path d="M.5 13.500c0-5 6-5 6 0M7.500 6.500c2-1.500 4 0 4 2.500" />
          </svg>
        </button>
        <button aria-label="แสดงไอคอนที่ซ่อนอยู่" className="ml-[19px]">
          <svg width="11" height="7" viewBox="0 0 11 7" fill="none" stroke="#fff">
            <path d="M.5 6l5-5 5 5" />
          </svg>
        </button>
        <div className="ml-[9px] flex items-center gap-[6px]">
          <svg width="12" height="12" viewBox="0 0 12 12" fill="none" stroke="#aaa">
            <path d="M.5 11.500c0-6 5-11 11-11M3.500 11.500c0-4.500 3.500-8 8-8M6.500 11.500c0-3 2-5 5-5" />
            <circle cx="10.300" cy="10.500" r="1.200" fill="#fff" stroke="none" />
          </svg>
          <svg width="14" height="10" viewBox="0 0 14 10" fill="none" stroke="#fff">
            <path d="M2.500 2.500h10v6h-10z" fill="#ddd" />
            <path d="M13.500 4v3M0 1.500h3M1 0v3M2.500 3v3" />
          </svg>
          <svg width="14" height="12" viewBox="0 0 14 12" fill="none" stroke="#fff">
            <path d="M.5 4h2L6 1v10L2.500 8h-2z" />
            <path d="M8 4c1 1.200 1 2.800 0 4" />
            <path d="M10 2.500c2 2 2 5 0 7M12 1c2.500 3 2.500 7 0 10" stroke="#777" />
          </svg>
        </div>
        <button className="ml-[9px]">ENG</button>
        <button className="ml-[6px] w-[52px] text-center leading-[15px]">
          17:43
          <br />
          5/11/2562
        </button>
        <button aria-label="ศูนย์ปฏิบัติการ" className="ml-3">
          <svg width="14" height="14" viewBox="0 0 14 14" fill="none" stroke="#fff">
            <path d="M9 11.500H4.500l-3 2v-2h-1v-11h13V7" />
            <path d="M13 8a4 4 0 1 1-5 5 5 5 0 0 0 5-5z" fill="#ddd" stroke="none" />
          </svg>
        </button>
        <span className="mr-[2px] ml-[17px] h-[33px] w-px bg-[#555]" />
      </div>
    </footer>
  )
}

interface TaskButtonProps {
  label: string
  running?: boolean
  active?: boolean
  children: ReactNode
}

function TaskButton({ label, running, active, children }: TaskButtonProps) {
  return (
    <button
      aria-label={label}
      className={clsx(
        'relative flex flex-1 items-center justify-center',
        active && 'bg-[#3c3c3c]'
      )}
    >
      {children}
      {running && (
        <span
          className={clsx(
            'absolute bottom-0 h-[2px] bg-[#f6c3a2]',
            active ? 'inset-x-0' : 'inset-x-[3px]'
          )}
        />
      )}
    </button>
  )
}
